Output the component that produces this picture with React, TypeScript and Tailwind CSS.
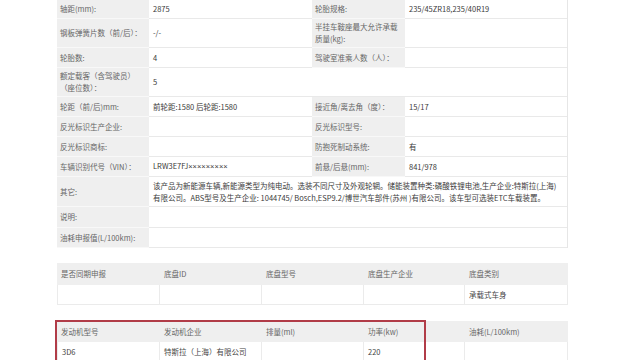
const font = "font-['Noto_Sans_CJK_SC','Liberation_Sans',sans-serif]";

const Label = ({
  children,
  className = "",
}: {
  children?: React.ReactNode;
  className?: string;
}) => (
  <div
    className={`flex items-center bg-[#efefef] pl-[3px] pr-1 text-[#666] border-b border-[#f8f8f8] ${className}`}
  >
    <span>{children}</span>
  </div>
);

const Value = ({
  children,
  className = "",
}: {
  children?: React.ReactNode;
  className?: string;
}) => (
  <div
    className={`flex items-center bg-white px-1 text-[#3a3a3a] border-b border-[#e9e9e9] ${className}`}
  >
    <span>{children}</span>
  </div>
);

const Row = ({
  h,
  children,
}: {
  h: string;
  children: React.ReactNode;
}) => (
  <div className={`grid grid-cols-[92px_163px_93px_162px] ${h}`}>
    {children}
  </div>
);

const cols5 = "grid grid-cols-[103px_102px_102px_101px_103px]";

export default function App() {
  return (
    <div
      className={`relative h-[360px] w-[640px] overflow-hidden bg-white text-[7.5px] leading-[12px] ${font}`}
    >
      <div className="ml-[57px] w-[511px] border-r border-[#e6e6e6]">
        <Row h="h-[19px]">
          <Label>轴距(mm):</Label>
          <Value>2875</Value>
          <Label className="pl-1">轮胎规格:</Label>
          <Value>235/45ZR18,235/40R19</Value>
        </Row>
        <Row h="h-[29px]">
          <Label>钢板弹簧片数（前/后）：</Label>
          <Value>-/-</Value>
          <Label className="pl-1">
            半挂车鞍座最大允许承载
            <br />
            质量(kg):
          </Label>
          <Value />
        </Row>
        <Row h="h-[20px]">
          <Label>轮胎数:</Label>
          <Value>4</Value>
          <Label className="pl-1">驾驶室准乘人数（人）：</Label>
          <Value />
        </Row>
        <Row h="h-[29px]">
          <Label>
            额定载客（含驾驶员）
            <br />
            （座位数）：
          </Label>
          <Value className="col-span-3">5</Value>
        </Row>
        <Row h="h-[20px]">
          <Label>轮距（前/后)mm:</Label>
          <Value>前轮距:1580 后轮距:1580</Value>
          <Label className="pl-1">接近角/离去角（度）：</Label>
          <Value>15/17</Value>
        </Row>
        <Row h="h-[20px]">
          <Label>反光标识生产企业:</Label>
          <Value />
          <Label className="pl-1">反光标识型号:</Label>
          <Value />
        </Row>
        <Row h="h-[20px]">
          <Label>反光标识商标:</Label>
          <Value />
          <Label className="pl-1">防抱死制动系统:</Label>
          <Value>有</Value>
        </Row>
        <Row h="h-[20px]">
          <Label>车辆识别代号（VIN）：</Label>
          <Value>
            LRW3E7FJ
            <span className="font-['Liberation_Sans',sans-serif]">×××××××××</span>
          </Value>
          <Label className="pl-1">前悬/后悬(mm):</Label>
          <Value>841/978</Value>
        </Row>
        <Row h="h-[30px]">
          <Label>其它:</Label>
          <Value className="col-span-3 whitespace-nowrap">
            该产品为新能源车辆,新能源类型为纯电动。选装不同尺寸及外观轮辋。储能装置种类:磷酸铁锂电池,生产企业:特斯拉(上海)
            <br />
            有限公司。ABS型号及生产企业: 1044745/ Bosch,ESP9.2/博世汽车部件(苏州 )有限公司。该车型可选装ETC车载装置。
          </Value>
        </Row>
        <Row h="h-[21px]">
          <Label>说明:</Label>
          <Value className="col-span-3" />
        </Row>
        <Row h="h-[20px]">
          <Label>油耗申报值(L/100km):</Label>
          <Value className="col-span-3" />
        </Row>
      </div>

      <div className="ml-[57px] mt-[15px] w-[511px]">
        <div className={`${cols5} h-[22px] bg-[#efefef] text-[#666]`}>
          {["是否同期申报", "底盘ID", "底盘型号", "底盘生产企业", "底盘类别"].map((t) => (
            <div key={t} className="flex items-center px-1">
              {t}
            </div>
          ))}
        </div>
        <div className={`${cols5} h-[20px] text-[#444]`}>
          {["", "", "", "", "承载式车身"].map((t, i) => (
            <div
              key={i}
              className="flex items-center px-1 border-b border-r border-[#ebebeb] first:border-l"
            >
              {t}
            </div>
          ))}
        </div>
      </div>

      <div className="ml-[57px] mt-[16px] w-[511px]">
        <div className={`${cols5} h-[21px] bg-[#efefef] text-[#666]`}>
          {["发动机型号", "发动机企业", "排量(ml)", "功率(kw)", "油耗(L/100km)"].map((t) => (
            <div key={t} className="flex items-center px-1">
              {t}
            </div>
          ))}
        </div>
        <div className={`${cols5} h-[20px] text-[#444]`}>
          {["3D6", "特斯拉（上海）有限公司", "", "220", ""].map((t, i) => (
            <div
              key={i}
              className="flex items-center px-1 border-b border-r border-[#ebebeb] first:border-l"
            >
              {t}
            </div>
          ))}
        </div>
      </div>

      {/* red annotation box drawn over the engine table */}
      <div className="absolute left-[55px] top-[320px] h-[50px] w-[371px] border-2 border-[#b13c48]" />
    </div>
  );
}
